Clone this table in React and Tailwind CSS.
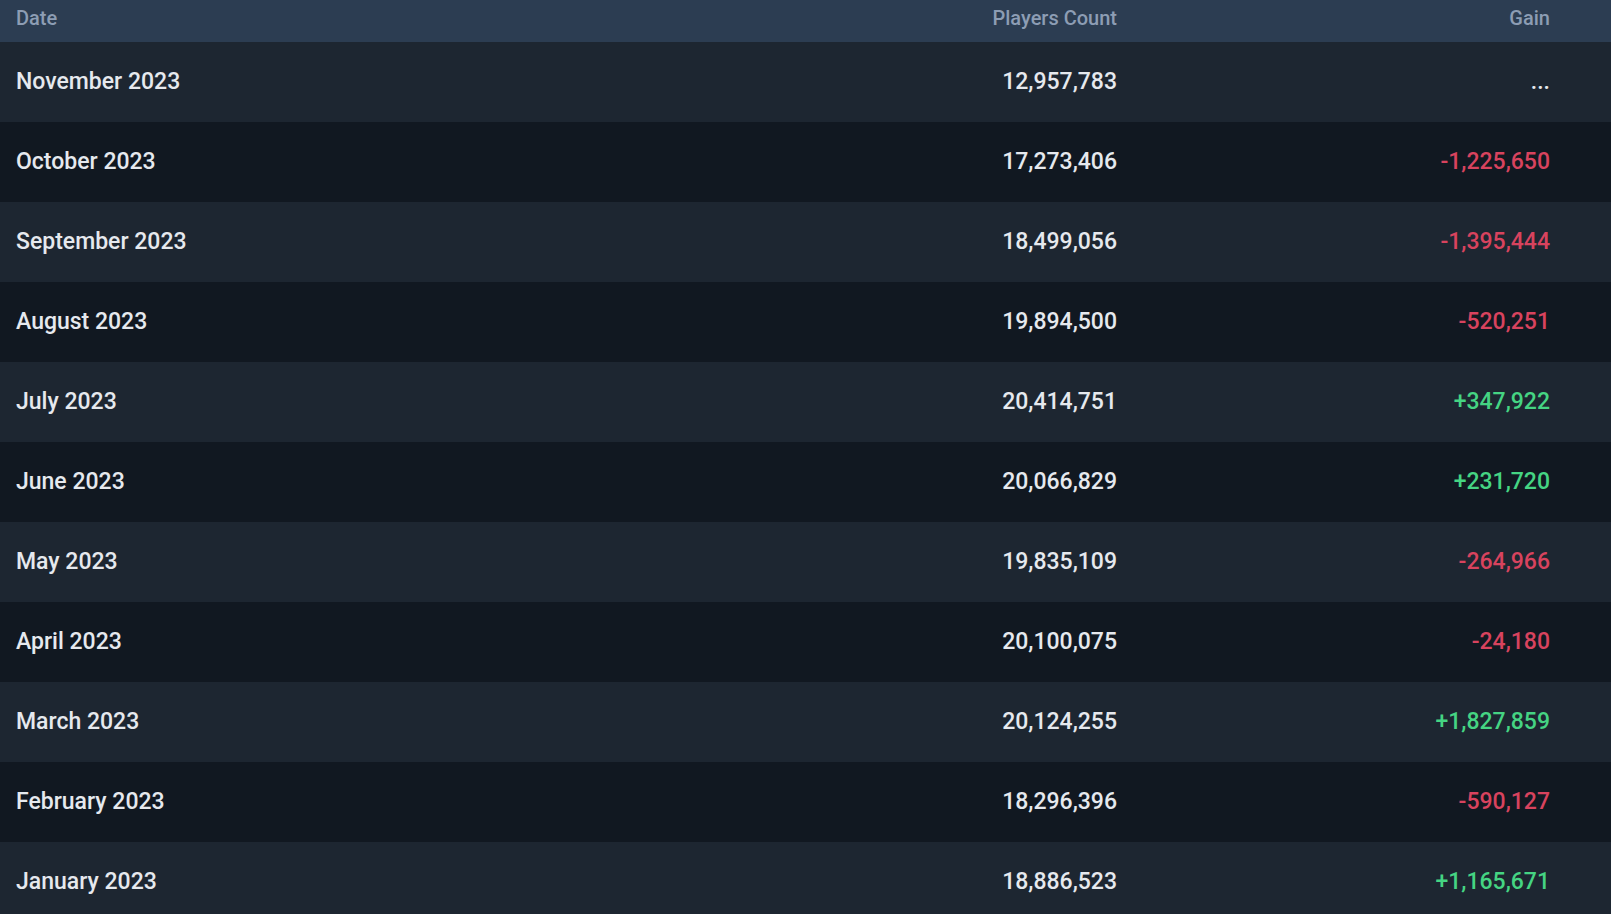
const ROWS = [
  { date: "November 2023", players: "12,957,783", gain: "..." },
  { date: "October 2023", players: "17,273,406", gain: "-1,225,650" },
  { date: "September 2023", players: "18,499,056", gain: "-1,395,444" },
  { date: "August 2023", players: "19,894,500", gain: "-520,251" },
  { date: "July 2023", players: "20,414,751", gain: "+347,922" },
  { date: "June 2023", players: "20,066,829", gain: "+231,720" },
  { date: "May 2023", players: "19,835,109", gain: "-264,966" },
  { date: "April 2023", players: "20,100,075", gain: "-24,180" },
  { date: "March 2023", players: "20,124,255", gain: "+1,827,859" },
  { date: "February 2023", players: "18,296,396", gain: "-590,127" },
  { date: "January 2023", players: "18,886,523", gain: "+1,165,671" },
];

function gainColor(gain) {
  if (gain.startsWith("+")) return "text-[#45d483]";
  if (gain.startsWith("-")) return "text-[#d8435e]";
  return "text-[#e6e9ee]";
}

export default function App() {
  return (
    <div
      className="h-[914px] w-full overflow-hidden bg-[#111821]"
      style={{ fontFamily: "Roboto, 'Noto Sans', sans-serif" }}
    >
      <div className="flex h-[42px] items-center bg-[#2c3d52] pb-[7px] pl-4 pr-[61px] text-[20px] font-medium text-[#8d9db4]">
        <div className="flex-1">Date</div>
        <div className="w-[300px] text-right">Players Count</div>
        <div className="w-[433px] text-right">Gain</div>
      </div>

      {ROWS.map((row, i) => (
        <div
          key={row.date}
          className={`flex h-[80px] shrink-0 items-center pl-4 pr-[61px] text-[23px] font-medium ${
            i % 2 === 0 ? "bg-[#1d2631]" : "bg-[#111821]"
          }`}
        >
          <div className="flex-1 text-[#e6e9ee]">{row.date}</div>
          <div className="w-[300px] text-right text-[#e6e9ee]">
            {row.players}
          </div>
          <div className={`w-[433px] text-right ${gainColor(row.gain)}`}>
            {row.gain}
          </div>
        </div>
      ))}
    </div>
  );
}
